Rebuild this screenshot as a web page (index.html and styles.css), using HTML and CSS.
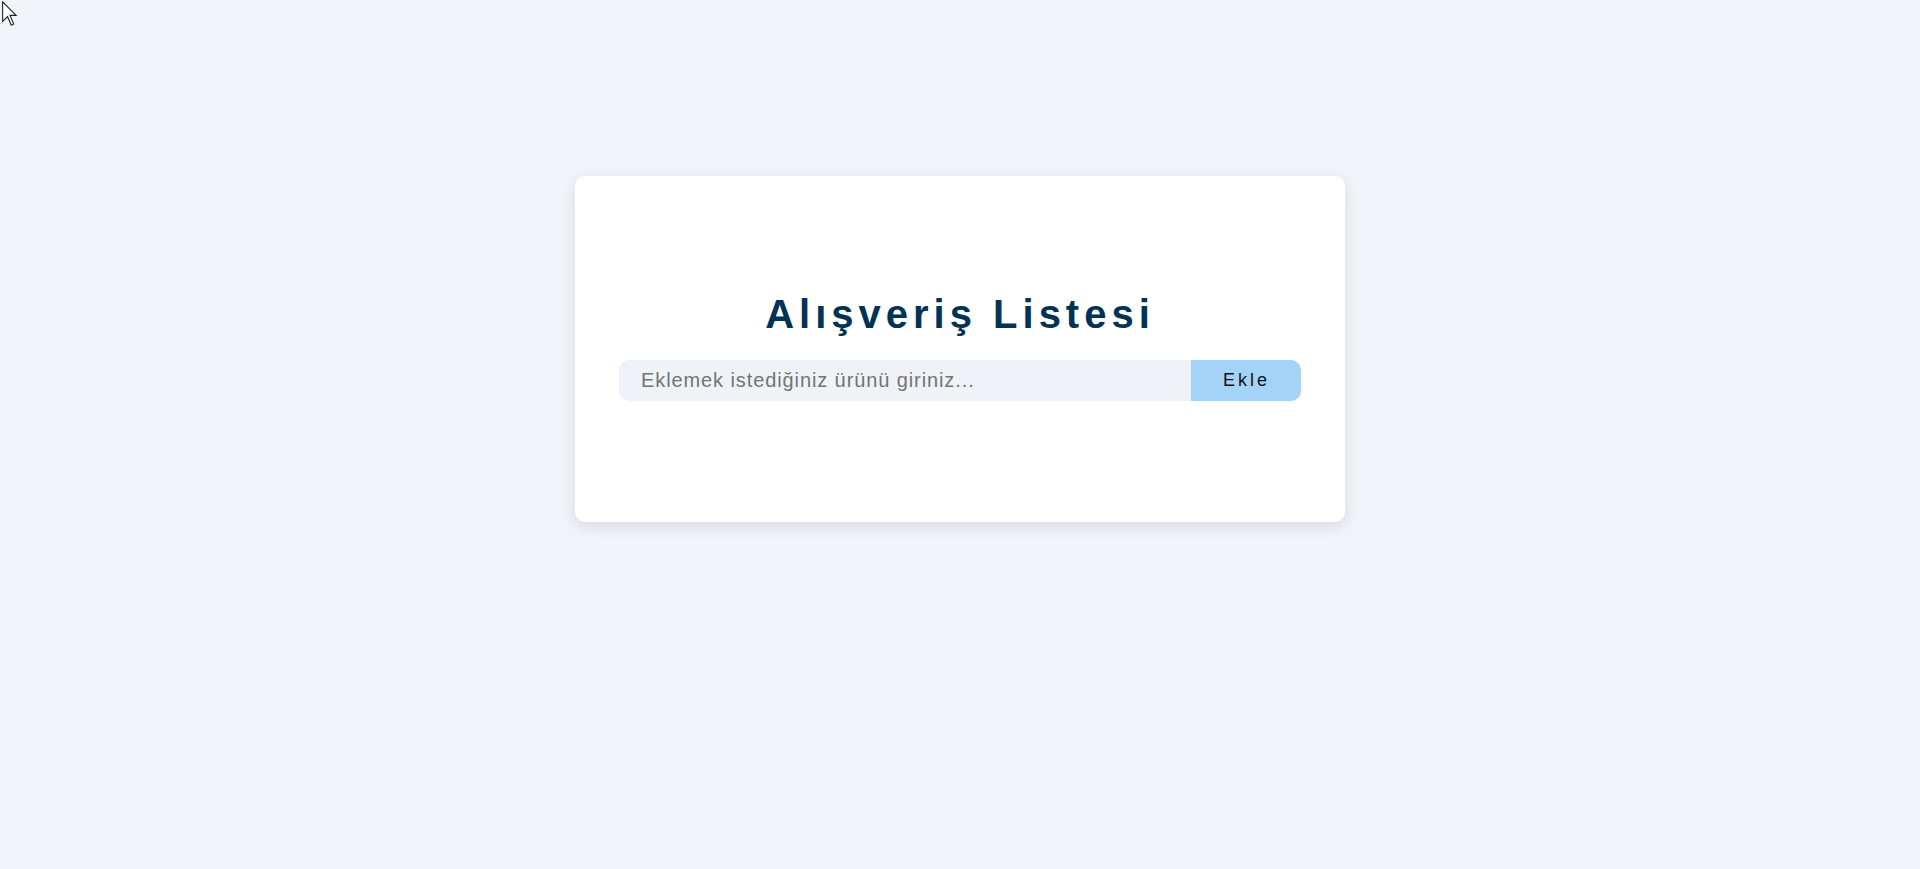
FILE: index.html
```html
<!DOCTYPE html>
<html lang="tr">
<head>
<meta charset="utf-8">
<title>Alışveriş Listesi</title>
<link rel="stylesheet" href="styles.css">
</head>
<body>
<main class="page">
  <section class="card">
    <h1 class="title">Alışveriş Listesi</h1>
    <form class="add-form" onsubmit="return false;">
      <input class="add-input" type="text" placeholder="Eklemek istediğiniz ürünü giriniz...">
      <button class="add-btn" type="submit">Ekle</button>
    </form>
  </section>
</main>
<svg class="cursor" width="16" height="25" viewBox="0 0 13 20" aria-hidden="true">
  <path d="M0.5 0.5 L0.5 16.5 L4.5 12.5 L7.5 19.5 L9.5 18.5 L6.5 11.5 L11.5 11.5 Z" fill="#fff" stroke="#222" stroke-width="0.9" stroke-linejoin="miter"/>
</svg>
</body>
</html>
```

FILE: styles.css
```css
* { box-sizing: border-box; }

html, body {
  margin: 0;
  padding: 0;
  height: 100%;
}

body {
  background: #f0f4f8;
  font-family: "Liberation Sans", Arial, sans-serif;
  overflow: hidden;
}

.page {
  display: flex;
  justify-content: center;
  padding-top: 176px;
}

.card {
  width: 770px;
  height: 346px;
  background: #ffffff;
  border-radius: 10px;
  box-shadow: 0 5px 15px rgba(0, 0, 0, 0.1);
  padding: 115px 44px 0 44px;
  display: flex;
  flex-direction: column;
  align-items: stretch;
}

.title {
  margin: 0 0 23px 0;
  font-size: 40px;
  line-height: 46px;
  font-weight: 700;
  letter-spacing: 5px;
  text-align: center;
  color: #023354;
}

.add-form {
  display: flex;
  height: 41px;
  border-radius: 10px;
  overflow: hidden;
}

.add-input {
  flex: 1;
  min-width: 0;
  border: none;
  outline: none;
  background: #eff3f8;
  padding: 0 0 0 22px;
  font-family: "Liberation Sans", Arial, sans-serif;
  font-size: 20px;
  letter-spacing: 0.9px;
  color: #333;
}

.add-input::placeholder {
  color: #737373;
}

.add-btn {
  width: 110px;
  border: none;
  background: #a3d4f7;
  color: #111;
  font-family: "Liberation Sans", Arial, sans-serif;
  font-size: 18px;
  letter-spacing: 3px;
  padding: 0 0 0 1px;
  cursor: pointer;
}

.cursor {
  position: absolute;
  left: 2px;
  top: 1px;
}
```
